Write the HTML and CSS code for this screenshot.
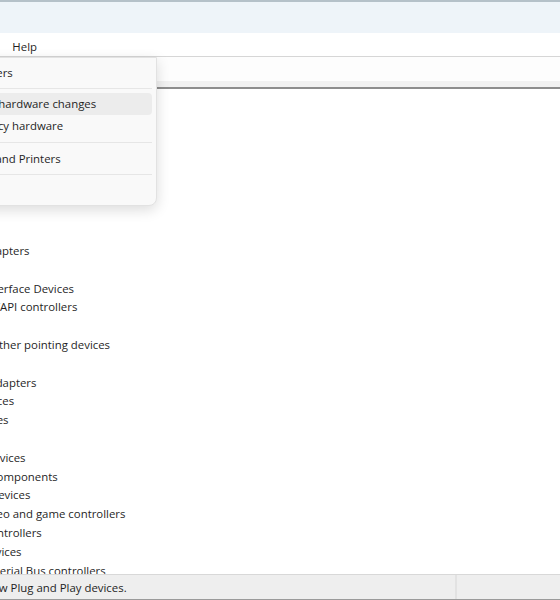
FILE: index.html
```html
<!DOCTYPE html>
<html lang="en">
<head>
  <meta charset="UTF-8" />
  <title>Device Manager</title>
  <link rel="stylesheet" href="styles.css">
</head>
<body>

<div class="window">
  <div class="titlebar"></div>

  <div class="menubar">
    <span class="menu-item">File</span>
    <span class="menu-item open">Action</span>
    <span class="menu-item">View</span>
    <span class="menu-item">Help</span>
  </div>

  <div class="toolbar"></div>
  <div class="toolbar-edge"></div>

  <div class="tree">
    <div class="node root">DESKTOP-7K2M4QF</div>
    <div class="node">Audio inputs and outputs</div>
    <div class="node">Batteries</div>
    <div class="node">Biometric devices</div>
    <div class="node">Bluetooth</div>
    <div class="node">Cameras</div>
    <div class="node">Computer</div>
    <div class="node">Disk drives</div>
    <div class="node">Display adapters</div>
    <div class="node">Firmware</div>
    <div class="node">Human Interface Devices</div>
    <div class="node">IDE ATA/ATAPI controllers</div>
    <div class="node">Keyboards</div>
    <div class="node">Mice and other pointing devices</div>
    <div class="node">Monitors</div>
    <div class="node">Network adapters</div>
    <div class="node">Other devices</div>
    <div class="node">Print queues</div>
    <div class="node">Processors</div>
    <div class="node">Security devices</div>
    <div class="node">Software components</div>
    <div class="node">Software devices</div>
    <div class="node">Sound, video and game controllers</div>
    <div class="node">Storage controllers</div>
    <div class="node">System devices</div>
    <div class="node">Universal Serial Bus controllers</div>
  </div>

  <div class="statusbar">
    <div class="status-text">Scans for changed or new Plug and Play devices.</div>
    <div class="status-cell"></div>
  </div>

  <!-- Action menu, dropped down over the toolbar and tree -->
  <div class="dropdown">
    <div class="drop-item">Add drivers</div>
    <div class="drop-sep"></div>
    <div class="drop-item hover">Scan for hardware changes</div>
    <div class="drop-item">Add legacy hardware</div>
    <div class="drop-sep wide"></div>
    <div class="drop-item">Devices and Printers</div>
    <div class="drop-sep"></div>
    <div class="drop-item">Help</div>
  </div>
</div>

</body>
</html>
```

FILE: styles.css
```css
* {
  box-sizing: border-box;
}

html, body {
  margin: 0;
  padding: 0;
  height: 100%;
  overflow: hidden;
  background: white;
  font-family: 'Open Sans', 'Noto Sans', sans-serif;
  font-size: 11.4px;
  color: #1f1f1f;
}

/* the window is wider than the shot, its left part is cut off */
.window {
  position: relative;
  margin-left: -140px;
  width: 700px;
  height: 600px;
  display: flex;
  flex-direction: column;
}

.titlebar {
  height: 33px;
  flex-shrink: 0;
  background: #eef4f9;
  border-top: 2px solid #b5c1c9;
}

.menubar {
  height: 24px;
  flex-shrink: 0;
  display: flex;
  align-items: center;
  padding: 3px 0 0 27px;
  border-bottom: 1px solid #d6d6d6;
}

.menu-item {
  padding: 0 7px;
}

.toolbar {
  height: 24px;
  flex-shrink: 0;
  background: #fdfdfd;
}

.toolbar-edge {
  height: 8px;
  flex-shrink: 0;
  background: #f1f1f1;
  border-bottom: 2px solid #8d8d8d;
}

.tree {
  flex: 1;
  overflow: hidden;
  padding-top: 2.6px;
}

.node {
  height: 18.8px;
  line-height: 18.8px;
  padding-left: 81px;
  white-space: nowrap;
}

.node.root {
  padding-left: 62px;
}

.statusbar {
  height: 26px;
  flex-shrink: 0;
  display: flex;
  align-items: center;
  background: #eeeeee;
  border-top: 1px solid #d8d8d8;
  border-bottom: 1px solid #9a9a9a;
}

.status-text {
  width: 597px;
  height: 100%;
  display: flex;
  align-items: center;
  padding-left: 11px;
  border-right: 2px solid #e2e2e2;
  white-space: nowrap;
}

.status-cell {
  flex: 1;
}

.dropdown {
  position: absolute;
  top: 57px;
  left: 60px;
  width: 237px;
  padding: 4px;
  background: #f9f9f9;
  border: 1px solid #e2e2e2;
  border-radius: 0 0 8px 8px;
  box-shadow: 0 4px 14px rgba(0, 0, 0, 0.14);
}

.drop-item {
  height: 22px;
  line-height: 22px;
  padding-left: 27px;
  border-radius: 4px;
  white-space: nowrap;
}

.drop-item.hover {
  background: #ececec;
}

.drop-sep {
  height: 1px;
  margin: 4px 0;
  background: #e6e6e6;
}

.drop-sep.wide {
  margin: 5px 0;
}
```
